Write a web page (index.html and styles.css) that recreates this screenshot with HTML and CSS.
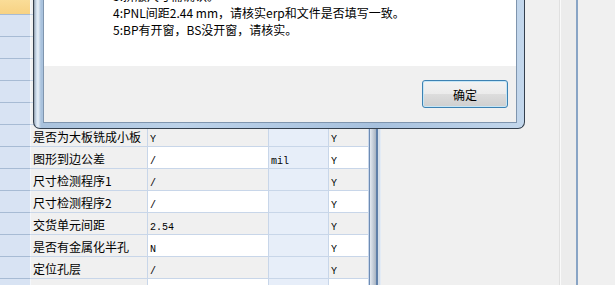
FILE: index.html
```html
<!DOCTYPE html>
<html>
<head>
    <title>工程资料核对</title>
    <link rel="stylesheet" href="styles.css">
</head>
<body>
    <div class="screen">
        <div class="sheet">
            <div class="row"><div class="c head sel"></div><div class="c label">自检结果</div><div class="c val"></div><div class="c unit"></div><div class="c flag"></div></div>
            <div class="row alt"><div class="c head"></div><div class="c label">板厚公差</div><div class="c val"></div><div class="c unit"></div><div class="c flag"></div></div>
            <div class="row"><div class="c head"></div><div class="c label">是否沉金</div><div class="c val"></div><div class="c unit"></div><div class="c flag"></div></div>
            <div class="row alt"><div class="c head"></div><div class="c label">是否喷锡</div><div class="c val"></div><div class="c unit"></div><div class="c flag"></div></div>
            <div class="row"><div class="c head"></div><div class="c label">鉴定层次</div><div class="c val"></div><div class="c unit"></div><div class="c flag"></div></div>
            <div class="row alt"><div class="c head"></div><div class="c label">一次铜厚</div><div class="c val"></div><div class="c unit"></div><div class="c flag"></div></div>
            <div class="row"><div class="c head"></div><div class="c label">是否为大板铣成小板</div><div class="c val">Y</div><div class="c unit"></div><div class="c flag">Y</div></div>
            <div class="row alt"><div class="c head"></div><div class="c label">图形到边公差</div><div class="c val">/</div><div class="c unit">mil</div><div class="c flag">Y</div></div>
            <div class="row"><div class="c head"></div><div class="c label">尺寸检测程序1</div><div class="c val">/</div><div class="c unit"></div><div class="c flag">Y</div></div>
            <div class="row alt"><div class="c head"></div><div class="c label">尺寸检测程序2</div><div class="c val">/</div><div class="c unit"></div><div class="c flag">Y</div></div>
            <div class="row"><div class="c head"></div><div class="c label">交货单元间距</div><div class="c val">2.54</div><div class="c unit"></div><div class="c flag">Y</div></div>
            <div class="row alt"><div class="c head"></div><div class="c label">是否有金属化半孔</div><div class="c val">N</div><div class="c unit"></div><div class="c flag">Y</div></div>
            <div class="row"><div class="c head"></div><div class="c label">定位孔层</div><div class="c val">/</div><div class="c unit"></div><div class="c flag">Y</div></div>
            <div class="row alt"><div class="c head"></div><div class="c label"></div><div class="c val"></div><div class="c unit"></div><div class="c flag"></div></div>
        </div>
        <div class="splitter"></div>
        <div class="side">
            <div class="side-gap"></div>
            <div class="side-line"></div>
            <div class="side-pane"></div>
            <div class="side-blue"></div>
            <div class="side-rest"></div>
        </div>

        <div class="dialog">
            <div class="dialog-inner">
                <div class="msg">
                    <p>1:板厚与订单不一致，请核实。</p>
                    <p>2:阻焊颜色请确认。</p>
                    <p>3:拼版尺寸需确认。</p>
                    <p>4:PNL间距2.44 mm，请核实erp和文件是否填写一致。</p>
                    <p>5:BP有开窗，BS没开窗，请核实。</p>
                </div>
                <div class="footer">
                    <button class="ok">确定</button>
                </div>
            </div>
        </div>
    </div>
</body>
</html>
```

FILE: styles.css
```css
body {
    margin: 0;
    background-color: #f0f0f0;
    overflow: hidden;
}
.screen {
    position: relative;
    width: 615px;
    height: 285px;
    display: flex;
    overflow: hidden;
}
.sheet {
    width: 369px;
    margin-top: -7px;
    flex-shrink: 0;
}
.row {
    display: flex;
    height: 22px;
}
.c {
    box-sizing: border-box;
    height: 22px;
    border-right: 1px solid #c8d6e9;
    border-bottom: 1px solid #c8d6e9;
    padding-left: 2px;
    line-height: 23px;
    white-space: nowrap;
    overflow: hidden;
    background-color: #f0f0f0;
}
.head {
    width: 31px;
    background-color: #d8e3f3;
    border-bottom-color: #a7bbd4;
    border-right-color: #f4f7fb;
}
.head.sel {
    background: linear-gradient(#fbe2a2, #f7d283);
}
.label {
    width: 117px;
    font-family: "Noto Sans CJK SC", sans-serif;
    font-size: 12px;
    color: #000;
}
.val, .unit, .flag {
    font-family: "Liberation Mono", monospace;
    font-size: 10px;
    color: #000;
    padding-top: 3px;
}
.val {
    width: 121px;
}
.unit {
    width: 60px;
    background-color: #e7eef9;
}
.flag {
    width: 40px;
}
.alt .val, .alt .flag {
    background-color: #fff;
}
.splitter {
    width: 11px;
    flex-shrink: 0;
    background: linear-gradient(to right, #6d8cb5 0, #6d8cb5 1px, #e4e9f0 1px, #a7b3c2 7px, #5f7fa8 7px, #5f7fa8 9px, #d5dfeb 9px);
}
.side {
    flex: 1;
    display: flex;
}
.side-gap {
    width: 179px;
    background-color: #f0f0f0;
    border-left: 1px solid #e3ebf5;
    box-sizing: border-box;
}
.side-line {
    width: 2px;
    background: linear-gradient(to right, #e0e0e0 1px, #fafafa 1px);
}
.side-pane {
    width: 15px;
    background-color: #ececec;
}
.side-blue {
    width: 2px;
    background-color: #88a4c5;
}
.side-rest {
    flex: 1;
    background-color: #f0f0f0;
}

/* message box laid over the sheet */
.dialog {
    position: absolute;
    left: 33px;
    top: -60px;
    width: 492px;
    height: 189px;
    box-sizing: border-box;
    border: 1px solid #34404e;
    border-top: none;
    border-radius: 0 0 7px 7px;
    padding: 0 7px 5px 9px;
    background: linear-gradient(to right, #8f9ba8 0, #c9d9ea 2px, #e9f0f7 4px, #a9c2dd 7px, #bcd2e9 30%, #a7c1de 70%, #c3d7ec 100%);
}
.dialog-inner {
    height: 100%;
    box-sizing: border-box;
    border: 1px solid #7f95ae;
    border-top: none;
    background-color: #f0f0f0;
    display: flex;
    flex-direction: column;
}
.msg {
    height: 126px;
    background-color: #fff;
    padding: 13px 0 0 69px;
    box-sizing: border-box;
    font-family: "Noto Sans CJK SC", sans-serif;
    font-size: 12px;
    color: #000;
}
.msg p {
    margin: 0;
    line-height: 17px;
    white-space: nowrap;
}
.footer {
    flex: 1;
    display: flex;
    justify-content: flex-end;
    align-items: flex-start;
    padding: 14px 8px 0 0;
}
.ok {
    width: 86px;
    height: 28px;
    border: 1px solid #3d82b3;
    border-radius: 3px;
    background: linear-gradient(#f3f3f3 0, #ebebeb 50%, #dddddd 50%, #cfcfcf 100%);
    box-shadow: inset 0 0 0 1px #c6e6f6;
    font-family: "Noto Sans CJK SC", sans-serif;
    font-size: 12px;
    color: #000;
    padding: 0;
}
```
